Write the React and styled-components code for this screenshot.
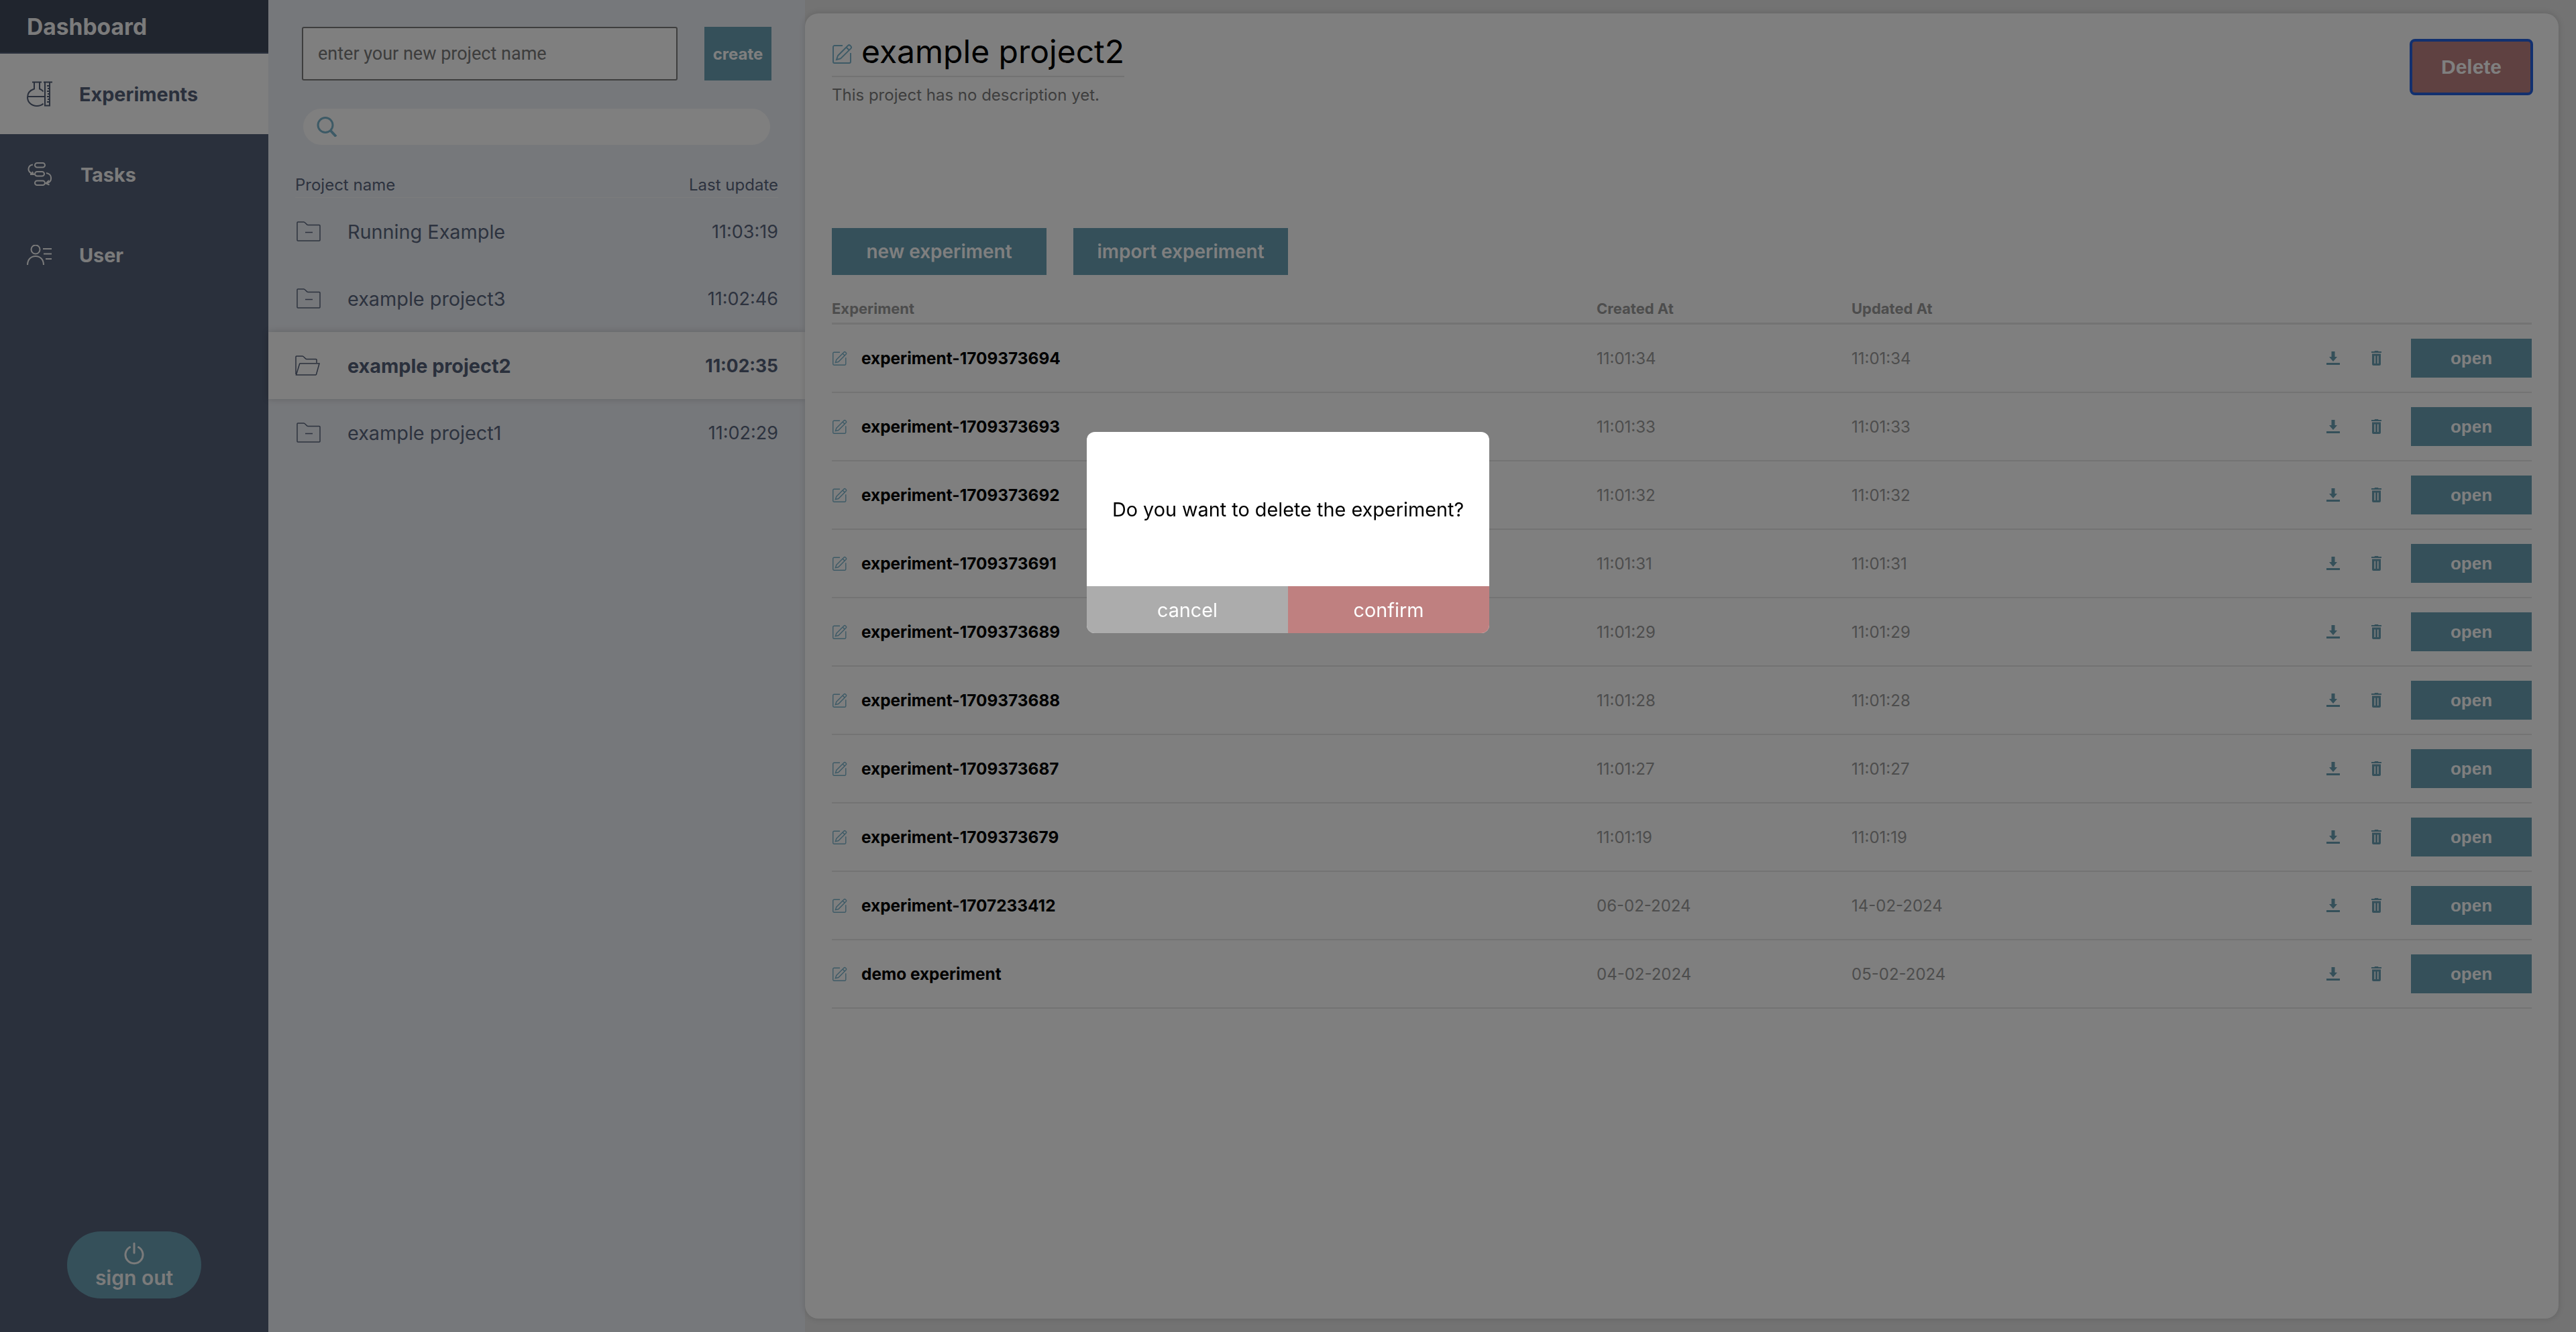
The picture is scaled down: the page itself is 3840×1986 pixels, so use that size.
import React from "react";
import styled, { createGlobalStyle } from "styled-components";

const GlobalStyle = createGlobalStyle`
  html, body { margin: 0; padding: 0; }
  body { font-family: "Inter", "Noto Sans", sans-serif; background: #e6e6e6; }
  * { box-sizing: border-box; }
`;

const projects = [
  { name: "Running Example", time: "11:03:19" },
  { name: "example project3", time: "11:02:46" },
  { name: "example project2", time: "11:02:35", active: true },
  { name: "example project1", time: "11:02:29" },
];

const experiments = [
  { name: "experiment-1709373694", created: "11:01:34", updated: "11:01:34" },
  { name: "experiment-1709373693", created: "11:01:33", updated: "11:01:33" },
  { name: "experiment-1709373692", created: "11:01:32", updated: "11:01:32" },
  { name: "experiment-1709373691", created: "11:01:31", updated: "11:01:31" },
  { name: "experiment-1709373689", created: "11:01:29", updated: "11:01:29" },
  { name: "experiment-1709373688", created: "11:01:28", updated: "11:01:28" },
  { name: "experiment-1709373687", created: "11:01:27", updated: "11:01:27" },
  { name: "experiment-1709373679", created: "11:01:19", updated: "11:01:19" },
  { name: "experiment-1707233412", created: "06-02-2024", updated: "14-02-2024" },
  { name: "demo experiment", created: "04-02-2024", updated: "05-02-2024" },
];

const FlaskIcon = () => (
  <svg width="38" height="38" viewBox="0 0 38 38" fill="none" stroke="currentColor" strokeWidth="2">
    <path d="M8 1.500h14M11 2v9.500C5 13.500 1 18 1 24c0 7.500 6 13 14 13 4 0 7-1.200 9.500-3.500M19 2v9.500c2.500 1 4.500 2.500 5.500 4" />
    <path d="M1.500 23h26" />
    <path d="M25 1.500h13M27 2v34.500h7V2" />
    <path d="M30 7h4M31 11h3M30 15h4M31 19h3M30 23h4M31 27h3M30 31h4" />
  </svg>
);

const TasksIcon = () => (
  <svg width="38" height="36" viewBox="0 0 38 36" fill="none" stroke="currentColor" strokeWidth="2">
    <rect x="12" y="1" width="15" height="6.500" rx="3.250" />
    <rect x="12" y="14" width="14" height="6.500" rx="3.250" />
    <rect x="12" y="27.500" width="15" height="6.500" rx="3.250" />
    <path d="M9 3.500C2 4.500-1 13 8.500 17.500" />
    <path d="M5 18l5 0-2-4" />
    <path d="M29 16c9 1 10 13 0 15.500" />
    <path d="M33 27l-4.500 4.500 5 2" />
  </svg>
);

const UserListIcon = () => (
  <svg width="38" height="30" viewBox="0 0 38 30" fill="none" stroke="currentColor" strokeWidth="2">
    <circle cx="13" cy="7" r="6.500" />
    <path d="M1 30c0-8 5-13 12-13s12 5 12 13" />
    <path d="M24 6h13M25 13.500h12M28 21h9" />
  </svg>
);

const FolderIcon = () => (
  <svg width="36" height="30" viewBox="0 0 36 30" fill="none" stroke="currentColor" strokeWidth="1.500">
    <path d="M1 2a1 1 0 0 1 1-1h9c2 0 4 4.500 6 4.500h17a1 1 0 0 1 1 1V28a1 1 0 0 1-1 1H2a1 1 0 0 1-1-1z" />
    <path d="M13 16.500h11" />
  </svg>
);

const OpenFolderIcon = () => (
  <svg width="37" height="30" viewBox="0 0 37 30" fill="none" stroke="currentColor" strokeWidth="1.500">
    <path d="M1 28V2a1 1 0 0 1 1-1h9c2 0 4 4.500 6 4.500h14a1 1 0 0 1 1 1V11" />
    <path d="M1.500 29h29a1 1 0 0 0 1-.800L36 12H7.500a1 1 0 0 0-1 .800z" />
  </svg>
);

const EditIcon = ({ size }) => (
  <svg width={size} height={size} viewBox="0 0 30 30" fill="none" stroke="currentColor" strokeWidth="1.900">
    <path d="M15 3H3a2 2 0 0 0-2 2v22a2 2 0 0 0 2 2h22a2 2 0 0 0 2-2V14" />
    <path d="M8 18L23 3c1-1 2.500-1 3.500 0l.8.800c1 1 1 2.500 0 3.500L12 22.500l-6 1.500z" />
    <path d="M20.500 5.500l4.500 4.500" />
  </svg>
);

const DownloadIcon = () => (
  <svg width="20" height="20" viewBox="0 0 20 20" fill="currentColor">
    <path d="M7.500 0h5v8H16l-6 7-6-7h3.500z" />
    <rect x="0" y="17" width="20" height="3" />
  </svg>
);

const TrashIcon = () => (
  <svg width="15" height="22" viewBox="0 0 15 22" fill="currentColor">
    <path d="M5 0h5l.5 1H15v2H0V1h4.500z" />
    <path fillRule="evenodd" d="M1 4.500h13v15.500a2 2 0 0 1-2 2H3a2 2 0 0 1-2-2zM4.400 7.500v11.500h1.700V7.500zM8.900 7.500v11.500h1.700V7.500z" />
  </svg>
);

const SearchIcon = () => (
  <svg width="31" height="30" viewBox="0 0 31 30" fill="none" stroke="#7ab4cc" strokeWidth="3">
    <circle cx="13" cy="12.500" r="11" />
    <path d="M21 21l8 8.500" strokeWidth="4" />
  </svg>
);

const PowerIcon = () => (
  <svg width="30" height="34" viewBox="0 0 30 34" fill="none" stroke="currentColor" strokeWidth="3" strokeLinecap="round">
    <path d="M15 2v14" />
    <path d="M8.500 7.500a13 13 0 1 0 13 0" />
  </svg>
);

const App = () => {
  return (
    <Page>
      <GlobalStyle />
      <Sidebar>
        <Brand>Dashboard</Brand>
        <NavItem $active>
          <FlaskIcon />
          <span>Experiments</span>
        </NavItem>
        <NavItem $textGap="42px">
          <TasksIcon />
          <span>Tasks</span>
        </NavItem>
        <NavItem>
          <UserListIcon />
          <span>User</span>
        </NavItem>
        <SignOut>
          <PowerIcon />
          sign out
        </SignOut>
      </Sidebar>

      <ProjectPanel>
        <CreateRow>
          <NameInput placeholder="enter your new project name" />
          <CreateButton>create</CreateButton>
        </CreateRow>
        <SearchBox>
          <SearchIcon />
        </SearchBox>
        <ProjectHead>
          <span>Project name</span>
          <span>Last update</span>
        </ProjectHead>
        {projects.map((p) => (
          <ProjectRow key={p.name} $active={p.active}>
            <FolderSlot $active={p.active}>{p.active ? <OpenFolderIcon /> : <FolderIcon />}</FolderSlot>
            <ProjectName>{p.name}</ProjectName>
            <ProjectTime $active={p.active}>{p.time}</ProjectTime>
          </ProjectRow>
        ))}
      </ProjectPanel>

      <Main>
        <Head>
          <div>
            <TitleRow>
              <TitleIcon><EditIcon size={30} /></TitleIcon>
              <Title>example project2</Title>
            </TitleRow>
            <Description>This project has no description yet.</Description>
          </div>
          <DeleteButton>Delete</DeleteButton>
        </Head>
        <Toolbar>
          <ToolButton>new experiment</ToolButton>
          <ToolButton>import experiment</ToolButton>
        </Toolbar>
        <TableHead>
          <span>Experiment</span>
          <span>Created At</span>
          <span>Updated At</span>
        </TableHead>
        {experiments.map((e) => (
          <TableRow key={e.name}>
            <NameCell>
              <RowIcon><EditIcon size={22} /></RowIcon>
              <ExperimentName>{e.name}</ExperimentName>
            </NameCell>
            <DateCell>{e.created}</DateCell>
            <DateCell>{e.updated}</DateCell>
            <Actions>
              <ActionIcon><DownloadIcon /></ActionIcon>
              <ActionIcon><TrashIcon /></ActionIcon>
              <OpenButton>open</OpenButton>
            </Actions>
          </TableRow>
        ))}
      </Main>

      <Overlay>
        <Modal>
          <ModalBody>Do you want to delete the experiment?</ModalBody>
          <ModalButtons>
            <ModalButton $bg="#acacac">cancel</ModalButton>
            <ModalButton $bg="#bf8080">confirm</ModalButton>
          </ModalButtons>
        </Modal>
      </Overlay>
    </Page>
  );
};

const Page = styled.div`
  display: flex;
  width: 3840px;
  height: 1986px;
  overflow: hidden;
  background: #e6e6e6;
`;

const Sidebar = styled.nav`
  display: flex;
  flex-direction: column;
  flex: 0 0 400px;
  background: #546078;
  padding-bottom: 50px;
`;

const Brand = styled.div`
  height: 78px;
  margin-bottom: 2px;
  padding: 0 40px;
  display: flex;
  align-items: center;
  background: #404a5c;
  color: #f6f6f6;
  font-size: 33.6px;
  font-weight: 700;
`;

const NavItem = styled.div`
  height: 120px;
  padding-left: 40px;
  display: flex;
  align-items: center;
  gap: ${(p) => p.$textGap || "40px"};
  font-size: 28.8px;
  font-weight: 700;
  background: ${(p) => (p.$active ? "#ffffff" : "transparent")};
  color: ${(p) => (p.$active ? "#546078" : "#f6f6f6")};
`;

const SignOut = styled.button`
  margin: auto auto 0;
  width: 200px;
  height: 100px;
  border: 0;
  border-radius: 50px;
  background: #6aa0b4;
  color: #f6f6f6;
  font: 600 30px/38px "Inter", sans-serif;
  padding-top: 4px;
  display: flex;
  flex-direction: column;
  align-items: center;
  justify-content: center;
`;

const ProjectPanel = styled.section`
  flex: 0 0 800px;
  background: #edf0f6;
  padding-top: 40px;
`;

const CreateRow = styled.div`
  display: flex;
  gap: 40px;
  padding: 0 50px;
`;

const NameInput = styled.input`
  width: 560px;
  height: 80px;
  border: 2px solid #7c7c7c;
  border-radius: 3px;
  background: #ffffff;
  padding: 0 22px;
  font: 400 27px "Roboto", sans-serif;
  &::placeholder { color: #7a7a7a; opacity: 1; }
`;

const CreateButton = styled.button`
  width: 100px;
  height: 80px;
  border: 0;
  background: #6aa0b4;
  color: #ffffff;
  font: 700 24px "Inter", sans-serif;
`;

const SearchBox = styled.div`
  margin: 42px 52px 0;
  height: 54px;
  border-radius: 27px;
  background: #ffffff;
  padding-left: 20px;
  display: flex;
  align-items: center;
`;

const ProjectHead = styled.div`
  margin: 44px 40px 0;
  height: 35px;
  padding-top: 1px;
  display: flex;
  justify-content: space-between;
  border-bottom: 1px solid #f8f9fb;
  color: #5a667e;
  font-size: 24px;
  line-height: 30px;
`;

const ProjectRow = styled.div`
  height: 100px;
  padding: 0 40px;
  display: flex;
  align-items: center;
  background: ${(p) => (p.$active ? "#fdfdfd" : "transparent")};
  box-shadow: ${(p) => (p.$active ? "0 0 10px rgba(0, 0, 0, 0.18)" : "none")};
  color: ${(p) => (p.$active ? "#546078" : "#5a667e")};
  font-weight: ${(p) => (p.$active ? 700 : 400)};
`;

const FolderSlot = styled.span`
  flex: 0 0 78px;
  padding-left: ${(p) => (p.$active ? "0" : "2px")};
  display: flex;
`;

const ProjectName = styled.span`
  flex: 1;
  font-size: 28.8px;
`;

const ProjectTime = styled.span`
  font-size: ${(p) => (p.$active ? "26.4px" : "27px")};
`;

const Main = styled.main`
  width: 2614px;
  height: 1946px;
  margin-top: 20px;
  padding: 40px;
  background: #ffffff;
  border-radius: 20px;
  box-shadow: 0 0 10px rgba(0, 0, 0, 0.15);
`;

const Head = styled.header`
  height: 280px;
  display: flex;
  justify-content: space-between;
  align-items: flex-start;
`;

const TitleRow = styled.div`
  height: 55px;
  margin-top: -2px;
  display: flex;
  align-items: flex-start;
  gap: 13px;
  box-sizing: content-box;
  border-bottom: 2px solid #e6e6e6;
`;

const TealIcon = styled.span`
  display: flex;
  color: #7ab4cc;
`;

const TitleIcon = styled(TealIcon)`
  margin: 7px 0 0 1px;
`;

const RowIcon = styled(TealIcon)`
  margin-left: 1px;
`;

const Title = styled.h1`
  margin: 0;
  color: #000;
  font-size: 48px;
  font-weight: 400;
  line-height: 37px;
`;

const Description = styled.p`
  margin: 12px 0 0;
  color: #7c7c7c;
  font-size: 24px;
`;

const DeleteButton = styled.button`
  width: 180px;
  height: 80px;
  border: 0;
  border-radius: 6px;
  outline: 4px solid #2460de;
  outline-offset: -2px;
  background: #bf8282;
  color: #ffffff;
  font: 700 30px "Liberation Sans", Arial, sans-serif;
`;

const Toolbar = styled.div`
  display: flex;
  gap: 40px;
`;

const ToolButton = styled.button`
  width: 320px;
  height: 70px;
  border: 0;
  background: #6aa0b4;
  color: #ffffff;
  font: 600 28px "Inter", sans-serif;
`;

const gridColumns = "1140px 380px 1fr auto";

const TableHead = styled.div`
  display: grid;
  grid-template-columns: ${gridColumns};
  align-items: center;
  height: 74px;
  padding-top: 32px;
  padding-bottom: 4px;
  border-bottom: 3px solid #e6e6e6;
  color: #9a9a9a;
  font-size: 22px;
  font-weight: 700;
`;

const TableRow = styled.div`
  display: grid;
  grid-template-columns: ${gridColumns};
  align-items: center;
  height: 102px;
  border-bottom: 2px solid #e6e6e6;
`;

const NameCell = styled.div`
  display: flex;
  align-items: center;
  gap: 21px;
`;

const ExperimentName = styled.span`
  color: #000;
  font-size: 24.4px;
  font-weight: 700;
`;

const DateCell = styled.span`
  color: #9a9a9a;
  font-size: 24px;
`;

const Actions = styled.div`
  display: flex;
  align-items: center;
`;

const ActionIcon = styled.span`
  width: 64px;
  display: flex;
  justify-content: center;
  color: #6aa0b4;
`;

const OpenButton = styled.button`
  margin-left: 20px;
  width: 180px;
  height: 58px;
  border: 0;
  background: #6aa0b4;
  color: #ffffff;
  font: 700 26px "Liberation Sans", Arial, sans-serif;
`;

const Overlay = styled.div`
  position: fixed;
  inset: 0;
  background: rgba(0, 0, 0, 0.5);
`;

const Modal = styled.div`
  position: absolute;
  left: 1620px;
  top: 644px;
  width: 600px;
  height: 300px;
  display: flex;
  flex-direction: column;
  background: #ffffff;
  border-radius: 12px;
  overflow: hidden;
`;

const ModalBody = styled.div`
  flex: 1;
  display: flex;
  align-items: center;
  justify-content: center;
  color: #000;
  font-size: 28.8px;
`;

const ModalButtons = styled.div`
  display: flex;
  height: 70px;
`;

const ModalButton = styled.button`
  flex: 1;
  border: 0;
  background: ${(p) => p.$bg};
  color: #ffffff;
  font: 400 28.8px "Inter", sans-serif;
`;

export default App;
